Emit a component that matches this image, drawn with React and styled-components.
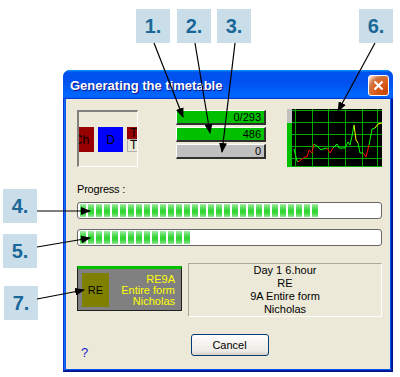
import React from "react";
import styled, { createGlobalStyle } from "styled-components";

const GlobalStyle = createGlobalStyle`
  html, body {
    margin: 0;
    padding: 0;
    background: #fff;
  }
  body {
    font-family: "Liberation Sans", Arial, sans-serif;
    font-size: 11px;
    color: #000;
  }
`;

const S = {};

S.Page = styled.div`
  position: relative;
  width: 400px;
  height: 377px;
  box-sizing: border-box;
  padding: 70px 0 0 63px;
  overflow: hidden;
  background: #fff;
`;

S.Window = styled.div`
  width: 330px;
  border-radius: 7px 7px 0 0;
  overflow: hidden;
  background: #0831d9;
`;

S.TitleBar = styled.div`
  height: 29px;
  box-sizing: border-box;
  display: flex;
  align-items: center;
  justify-content: space-between;
  padding: 0 4px 0 7px;
  background: linear-gradient(
    180deg,
    #0997ff,
    #0053ee 8%,
    #0050ee 40%,
    #06f 88%,
    #06f 93%,
    #005bff 95%,
    #003dd7 96%,
    #003dd7
  );
`;

S.Title = styled.span`
  color: #fff;
  font-weight: bold;
  font-size: 13px;
  text-shadow: 1px 1px #0f1089;
  padding-top: 1px;
`;

S.CloseButton = styled.div`
  width: 21px;
  height: 21px;
  box-sizing: border-box;
  border: 1px solid #fff;
  border-radius: 3px;
  display: flex;
  align-items: center;
  justify-content: center;
  background: radial-gradient(
    circle at 85% 85%,
    #cc4600 0%,
    #dc6527 55%,
    #cd7546 70%,
    #ffccb2 90%,
    #fff 100%
  );
  margin-top: 1px;
`;

S.Frame = styled.div`
  padding: 0 3px 3px;
  background: #0055ea;
  box-shadow: inset -1px -1px #00138c, inset 1px 0 #0831d9,
    inset -2px -2px #001ea0, inset 2px 0 #166aee;
`;

S.Body = styled.div`
  height: 270px;
  box-sizing: border-box;
  padding: 11px 8px 0 11px;
  background: #ece9d8;
  display: flex;
  flex-direction: column;
`;

S.TopRow = styled.div`
  display: flex;
  align-items: flex-start;
  height: 57px;
`;

S.TileStrip = styled.div`
  width: 61px;
  height: 57px;
  box-sizing: border-box;
  border-style: solid;
  border-width: 2px 1px 1px 2px;
  border-color: #808080 #fff #fff #808080;
  display: flex;
  align-items: center;
  gap: 4px;
  overflow: hidden;
  padding-top: 1px;
`;

S.Tile = styled.div`
  flex-shrink: 0;
  width: 25px;
  height: 25px;
  margin-left: ${p => p.$shift || 0}px;
  background: ${p => p.$bg};
  display: flex;
  align-items: center;
  justify-content: center;
  font-size: 12px;
`;

S.TileStack = styled.div`
  flex-shrink: 0;
  width: 25px;
  height: 25px;
  display: flex;
  flex-direction: column;
`;

S.StackPart = styled.div`
  height: ${p => p.$h}px;
  box-sizing: border-box;
  background: ${p => p.$bg};
  border: ${p => (p.$outlined ? "1px solid #b0b0b0" : "none")};
  padding-left: ${p => (p.$outlined ? 2 : 3)}px;
  font-size: 12px;
  line-height: ${p => p.$h - (p.$outlined ? 2 : 0)}px;
`;

S.Counters = styled.div`
  width: 90px;
  margin-left: 38px;
  display: flex;
  flex-direction: column;
  gap: 2px;
`;

S.Counter = styled.div`
  height: 15px;
  box-sizing: border-box;
  border-style: solid;
  border-width: 1px 2px 2px 1px;
  border-color: #fff #303030 #303030 #fff;
  background: ${p => p.$bg};
  text-align: right;
  padding-right: 3px;
  line-height: 12px;
  font-size: 11px;
`;

S.Chart = styled.svg`
  display: block;
  margin-left: 21px;
  margin-top: -1px;
`;

S.Label = styled.div`
  margin-top: 16px;
  line-height: 13px;
  letter-spacing: -0.2px;
`;

S.Track = styled.div`
  margin-top: ${p => p.$gap}px;
  height: 17px;
  box-sizing: border-box;
  border: 1px solid #686868;
  border-radius: 3px;
  background: #fff;
  padding: 1px 2px;
`;

S.Fill = styled.div`
  width: ${p => p.$chunks * 8}px;
  height: 100%;
  background: repeating-linear-gradient(
      90deg,
      transparent 0 6px,
      #fff 6px 8px
    ),
    linear-gradient(
      180deg,
      #acedad 0%,
      #7be47d 15%,
      #4cda50 35%,
      #2ed330 55%,
      #44d846 75%,
      #92e894 100%
    );
`;

S.BottomRow = styled.div`
  margin-top: 17px;
  display: flex;
  align-items: flex-start;
`;

S.Lesson = styled.div`
  width: 105px;
  height: 45px;
  margin-top: 3px;
  box-sizing: border-box;
  border: 1px solid #202020;
  border-top: 3px solid #00c000;
  background: #808080;
  display: flex;
  align-items: center;
  justify-content: space-between;
  padding: 0 6px 0 4px;
`;

S.Subject = styled.div`
  width: 27px;
  height: 34px;
  background: #808000;
  display: flex;
  align-items: center;
  justify-content: center;
  font-size: 11px;
  margin-top: 1px;
`;

S.LessonText = styled.div`
  color: #ffff00;
  text-align: right;
  line-height: 11px;
  font-size: 11px;
  margin-top: 2px;
`;

S.Info = styled.div`
  width: 194px;
  height: 54px;
  margin-left: 6px;
  box-sizing: border-box;
  border-style: solid;
  border-width: 1px;
  border-color: #aca899 #fff #fff #aca899;
  display: flex;
  flex-direction: column;
  justify-content: center;
  text-align: center;
  line-height: 13px;
  font-size: 11px;
`;

S.Footer = styled.div`
  margin-top: 17px;
  display: grid;
  grid-template-columns: 1fr auto 1fr;
`;

S.Help = styled.span`
  justify-self: start;
  margin: 12px 0 0 4px;
  color: #1c1cc8;
  font-size: 13px;
  line-height: 13px;
`;

S.Button = styled.button`
  width: 78px;
  height: 22px;
  box-sizing: border-box;
  border: 1px solid #003c74;
  border-radius: 3px;
  background: linear-gradient(180deg, #fff 0%, #f4f3ee 40%, #ecebe6 80%, #d6d0c5 100%);
  font-family: "Liberation Sans", Arial, sans-serif;
  font-size: 11px;
  color: #000;
  padding: 0;
`;

S.Callout = styled.div`
  position: absolute;
  left: ${p => p.$x}px;
  top: ${p => p.$y}px;
  width: 34px;
  height: 34px;
  background: #cadeea;
  color: #1b6898;
  font-weight: bold;
  font-size: 20px;
  display: flex;
  align-items: center;
  justify-content: center;
`;

S.Arrows = styled.svg`
  position: absolute;
  left: 0;
  top: 0;
  pointer-events: none;
`;

const chartLines = [
  { c: "#00ff00", p: "7,40 10,52 11,53" },
  { c: "#ff0000", p: "11,53 15,50 18,48 20,48 22,41 25,44 27,35" },
  { c: "#00ff00", p: "27,35 31,38 34,41 36,40 40,39" },
  { c: "#ff0000", p: "40,39 43,44 46,39" },
  { c: "#00ff00", p: "46,39 50,35 52,39 58,39 61,33 63,36 65,27 67,16" },
  { c: "#ffff00", p: "67,16 69,31 71,34" },
  { c: "#00ff00", p: "71,34 73,44 76,44" },
  { c: "#ff0000", p: "76,44 79,48 82,36" },
  { c: "#00ff00", p: "82,36 85,20 88,19" },
  { c: "#ffff00", p: "88,19 91,15 95,14" }
];

const Chart = () => (
  <S.Chart width="95" height="58" viewBox="0 0 95 58">
    <rect x="0" y="0" width="95" height="58" fill="#000" />
    <rect x="0" y="0" width="5" height="14" fill="#c0c0c0" />
    <rect x="0" y="14" width="5" height="44" fill="#00c000" />
    {[8, 25, 41, 58, 75, 90].map(x => (
      <line key={x} x1={x + 0.5} y1="0" x2={x + 0.5} y2="58" stroke="#00a800" />
    ))}
    {[1, 13, 25, 37, 49, 57].map(y => (
      <line key={y} x1="5" y1={y + 0.5} x2="95" y2={y + 0.5} stroke="#00a800" />
    ))}
    {chartLines.map((l, i) => (
      <polyline key={i} points={l.p} fill="none" stroke={l.c} strokeWidth="1" />
    ))}
  </S.Chart>
);

const arrows = [
  [154, 43, 183, 117],
  [195, 43, 210, 133],
  [235, 43, 222, 152],
  [375, 43, 338, 111],
  [37, 211, 90, 211],
  [37, 247, 90, 238],
  [37, 299, 84, 290]
];

const Arrows = () => (
  <S.Arrows width="400" height="377" viewBox="0 0 400 377">
    <defs>
      <marker
        id="head"
        markerUnits="userSpaceOnUse"
        markerWidth="10"
        markerHeight="8"
        refX="9"
        refY="4"
        orient="auto"
      >
        <path d="M0,0 L10,4 L0,8 z" fill="#000" />
      </marker>
    </defs>
    {arrows.map(([x1, y1, x2, y2], i) => (
      <line
        key={i}
        x1={x1}
        y1={y1}
        x2={x2}
        y2={y2}
        stroke="#000"
        strokeWidth="1.2"
        markerEnd="url(#head)"
      />
    ))}
  </S.Arrows>
);

const App = () => {
  return (
    <>
      <GlobalStyle />
      <S.Page>
        <S.Window>
          <S.TitleBar>
            <S.Title>Generating the timetable</S.Title>
            <S.CloseButton>
              <svg width="11" height="11" viewBox="0 0 11 11">
                <path d="M1.5 1.5 L9.5 9.5 M9.5 1.5 L1.5 9.5" stroke="#fff" strokeWidth="2.2" />
              </svg>
            </S.CloseButton>
          </S.TitleBar>
          <S.Frame>
            <S.Body>
              <S.TopRow>
                <S.TileStrip>
                  <S.Tile $bg="#990000" $shift={-10}>Ch</S.Tile>
                  <S.Tile $bg="#0000ff">D</S.Tile>
                  <S.TileStack>
                    <S.StackPart $h={12} $bg="#990000">T</S.StackPart>
                    <S.StackPart $h={13} $bg="#ece9d8" $outlined>T</S.StackPart>
                  </S.TileStack>
                </S.TileStrip>
                <S.Counters>
                  <S.Counter $bg="#00c000">0/293</S.Counter>
                  <S.Counter $bg="#00c000">486</S.Counter>
                  <S.Counter $bg="#c0c0c0">0</S.Counter>
                </S.Counters>
                <Chart />
              </S.TopRow>

              <S.Label>Progress :</S.Label>
              <S.Track $gap={6}>
                <S.Fill $chunks={30} />
              </S.Track>
              <S.Track $gap={10}>
                <S.Fill $chunks={14} />
              </S.Track>

              <S.BottomRow>
                <S.Lesson>
                  <S.Subject>RE</S.Subject>
                  <S.LessonText>
                    RE9A
                    <br />
                    Entire form
                    <br />
                    Nicholas
                  </S.LessonText>
                </S.Lesson>
                <S.Info>
                  <div>Day 1 6.hour</div>
                  <div>RE</div>
                  <div>9A Entire form</div>
                  <div>Nicholas</div>
                </S.Info>
              </S.BottomRow>

              <S.Footer>
                <S.Help>?</S.Help>
                <S.Button>Cancel</S.Button>
              </S.Footer>
            </S.Body>
          </S.Frame>
        </S.Window>

        <S.Callout $x={136} $y={9}>1.</S.Callout>
        <S.Callout $x={177} $y={9}>2.</S.Callout>
        <S.Callout $x={217} $y={9}>3.</S.Callout>
        <S.Callout $x={359} $y={9}>6.</S.Callout>
        <S.Callout $x={3} $y={189}>4.</S.Callout>
        <S.Callout $x={3} $y={234}>5.</S.Callout>
        <S.Callout $x={4} $y={286}>7.</S.Callout>
        <Arrows />
      </S.Page>
    </>
  );
};

export default App;
